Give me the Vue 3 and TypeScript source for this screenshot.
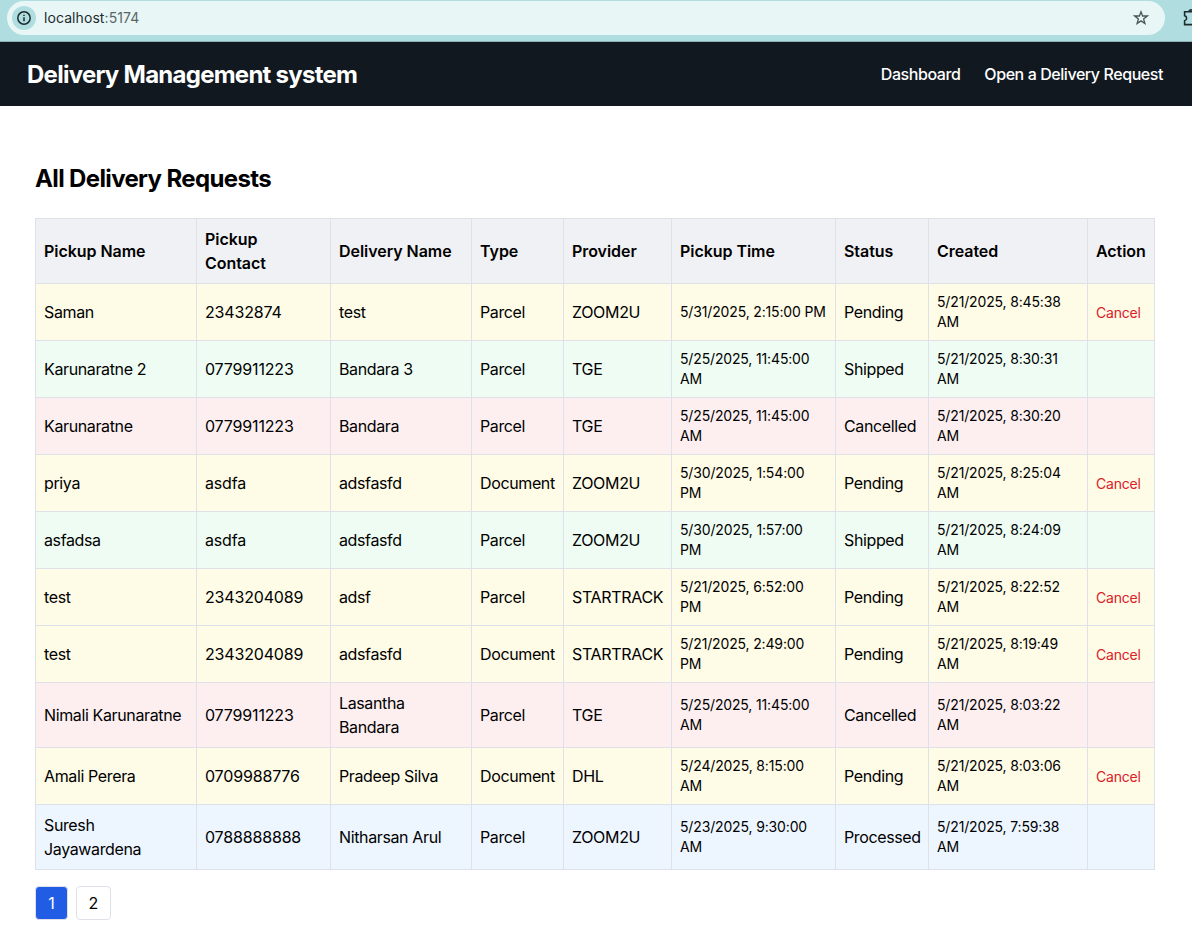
<script setup lang="ts">
import { ref } from 'vue'

type Status = 'Pending' | 'Shipped' | 'Cancelled' | 'Processed'

interface DeliveryRequest {
  pickupName: string
  contact: string
  deliveryName: string
  type: string
  provider: string
  pickupTime: string
  status: Status
  created: string
}

const headings: string[] = [
  'Pickup Name', 'Pickup\nContact', 'Delivery Name', 'Type', 'Provider',
  'Pickup Time', 'Status', 'Created', 'Action',
]

function request(
  pickupName: string, contact: string, deliveryName: string, type: string,
  provider: string, pickupTime: string, status: Status, created: string,
): DeliveryRequest {
  return { pickupName, contact, deliveryName, type, provider, pickupTime, status, created }
}

const requests: DeliveryRequest[] = [
  request('Saman', '23432874', 'test', 'Parcel', 'ZOOM2U', '5/31/2025, 2:15:00 PM', 'Pending', '5/21/2025, 8:45:38\nAM'),
  request('Karunaratne 2', '0779911223', 'Bandara 3', 'Parcel', 'TGE', '5/25/2025, 11:45:00\nAM', 'Shipped', '5/21/2025, 8:30:31\nAM'),
  request('Karunaratne', '0779911223', 'Bandara', 'Parcel', 'TGE', '5/25/2025, 11:45:00\nAM', 'Cancelled', '5/21/2025, 8:30:20\nAM'),
  request('priya', 'asdfa', 'adsfasfd', 'Document', 'ZOOM2U', '5/30/2025, 1:54:00\nPM', 'Pending', '5/21/2025, 8:25:04\nAM'),
  request('asfadsa', 'asdfa', 'adsfasfd', 'Parcel', 'ZOOM2U', '5/30/2025, 1:57:00\nPM', 'Shipped', '5/21/2025, 8:24:09\nAM'),
  request('test', '2343204089', 'adsf', 'Parcel', 'STARTRACK', '5/21/2025, 6:52:00\nPM', 'Pending', '5/21/2025, 8:22:52\nAM'),
  request('test', '2343204089', 'adsfasfd', 'Document', 'STARTRACK', '5/21/2025, 2:49:00\nPM', 'Pending', '5/21/2025, 8:19:49\nAM'),
  request('Nimali Karunaratne', '0779911223', 'Lasantha\nBandara', 'Parcel', 'TGE', '5/25/2025, 11:45:00\nAM', 'Cancelled', '5/21/2025, 8:03:22\nAM'),
  request('Amali Perera', '0709988776', 'Pradeep Silva', 'Document', 'DHL', '5/24/2025, 8:15:00\nAM', 'Pending', '5/21/2025, 8:03:06\nAM'),
  request('Suresh\nJayawardena', '0788888888', 'Nitharsan Arul', 'Parcel', 'ZOOM2U', '5/23/2025, 9:30:00\nAM', 'Processed', '5/21/2025, 7:59:38\nAM'),
]

const pages: number[] = [1, 2]
const currentPage = ref<number>(1)
</script>

<template>
  <div class="page">
    <div class="browser-bar">
      <div class="address">
        <span class="site-info">
          <svg width="16" height="16" viewBox="0 0 16 16" fill="none" stroke="#1d2b2c" stroke-width="1.5">
            <circle cx="8" cy="8" r="6.2" />
            <path d="M8 7.2V11.2M8 4.7V6.1" />
          </svg>
        </span>
        <span class="url">localhost<span class="port">:5174</span></span>
        <svg class="star" width="16" height="16" viewBox="0 0 16 16" fill="none" stroke="#4b5557" stroke-width="1.3">
          <path d="M8 1.8L9.6 6H14.2L10.6 8.9L11.9 13.5L8 10.9L4.1 13.5L5.4 8.9L1.8 6H6.4Z" />
        </svg>
      </div>
      <svg class="extensions" width="10" height="20" viewBox="0 0 10 20" fill="none" stroke="#1d2b2c" stroke-width="1.6">
        <path d="M12 3.8H2.6V7.6C5.3 8.2 5.3 12.2 2.6 12.8V16.6H12M7 3.6C7.3 2 9 1.6 10 2.2" />
      </svg>
    </div>

    <header class="navbar">
      <h1>Delivery Management system</h1>
      <nav>
        <a class="dash">Dashboard</a>
        <a class="open">Open a Delivery Request</a>
      </nav>
    </header>

    <main>
      <h2>All Delivery Requests</h2>
      <table>
        <colgroup>
          <col v-for="n in 9" :key="n" :class="`c${n}`" />
        </colgroup>
        <thead>
          <tr>
            <th v-for="h in headings" :key="h">{{ h }}</th>
          </tr>
        </thead>
        <tbody>
          <tr v-for="(r, i) in requests" :key="i" :class="r.status.toLowerCase()">
            <td>{{ r.pickupName }}</td>
            <td class="num">{{ r.contact }}</td>
            <td>{{ r.deliveryName }}</td>
            <td>{{ r.type }}</td>
            <td class="provider">{{ r.provider }}</td>
            <td class="time">{{ r.pickupTime }}</td>
            <td>{{ r.status }}</td>
            <td class="time">{{ r.created }}</td>
            <td><button v-if="r.status === 'Pending'" class="cancel">Cancel</button></td>
          </tr>
        </tbody>
      </table>
      <div class="pager">
        <button v-for="p in pages" :key="p" :class="{ active: p === currentPage }" @click="currentPage = p">{{ p }}</button>
      </div>
    </main>
  </div>
</template>

<style>
body {
  margin: 0;
  background: #fff;
}
</style>

<style scoped>
.page {
  box-sizing: border-box;
  height: 937px;
  overflow: hidden;
  font-family: Inter, "Liberation Sans", sans-serif;
  font-size: 16px;
  line-height: 24px;
  color: #000;
}
.browser-bar {
  box-sizing: border-box;
  display: flex;
  height: 42px;
  padding: 1px 0 0 7px;
  background: #b0dee0;
  border-bottom: 1px solid #8db2b3;
}
.address {
  box-sizing: border-box;
  display: flex;
  flex-shrink: 0;
  align-items: center;
  width: 1158px;
  height: 34px;
  padding: 0 16px 0 5px;
  border-radius: 17px;
  background: #e8f6f6;
}
.site-info {
  display: flex;
  align-items: center;
  justify-content: center;
  width: 24px;
  height: 24px;
  border-radius: 50%;
  background: #b0dee0;
}
.url {
  margin-left: 8px;
  font-size: 14px;
  color: #1d2b2c;
  letter-spacing: 0.08px;
}
.port {
  color: #5b6667;
}
.star {
  margin-left: auto;
}
.extensions {
  flex-shrink: 0;
  margin: 7px 0 0 17px;
}
.navbar {
  box-sizing: border-box;
  display: flex;
  align-items: center;
  justify-content: space-between;
  height: 64px;
  padding: 0 29px 0 27px;
  background: #111820;
  color: #fff;
}
h1, h2 {
  margin: 0;
  font-size: 24px;
  line-height: 32px;
  font-weight: 700;
  white-space: nowrap;
}
h1 {
  padding-top: 2px;
  letter-spacing: -0.74px;
}
h2 {
  letter-spacing: -0.64px;
}
nav {
  display: flex;
  gap: 24px;
  font-weight: 500;
  letter-spacing: -0.43px;
  white-space: nowrap;
}
main {
  padding: 57px 37px 0 35px;
}
table {
  width: 1120px;
  margin-top: 23px;
  table-layout: fixed;
  border-collapse: collapse;
}
.c1 { width: 161px; }
.c2 { width: 134px; }
.c3 { width: 141px; }
.c4 { width: 92px; }
.c5 { width: 108px; }
.c6 { width: 164px; }
.c7 { width: 93px; }
.c8 { width: 159px; }
.c9 { width: 67px; }
th, td {
  padding: 8px;
  border: 1px solid #dfe1e8;
  text-align: left;
  vertical-align: middle;
  white-space: pre;
  letter-spacing: -0.37px;
}
th {
  background: #f0f1f4;
  font-weight: 600;
  letter-spacing: -0.05px;
}
.num {
  letter-spacing: -0.17px;
}
.provider {
  letter-spacing: -0.32px;
}
.time {
  font-size: 14px;
  line-height: 20px;
  letter-spacing: -0.15px;
}
.pending td { background: #fefbe6; }
.shipped td { background: #eefcf3; }
.cancelled td { background: #fdeff0; }
.processed td { background: #edf5ff; }
button {
  font: inherit;
  cursor: pointer;
}
.cancel {
  padding: 0;
  border: 0;
  background: none;
  color: #da2128;
  font-size: 14px;
  line-height: 20px;
  letter-spacing: -0.2px;
}
.pager {
  display: flex;
  gap: 8px;
  margin-top: 16px;
}
.pager button {
  box-sizing: border-box;
  width: 35px;
  height: 34px;
  padding: 0;
  border: 1px solid #dfe1e8;
  border-radius: 4px;
  background: #fff;
  color: #000;
}
.pager button.active {
  width: 33px;
  background: #215ce4;
  color: #fff;
}
</style>
